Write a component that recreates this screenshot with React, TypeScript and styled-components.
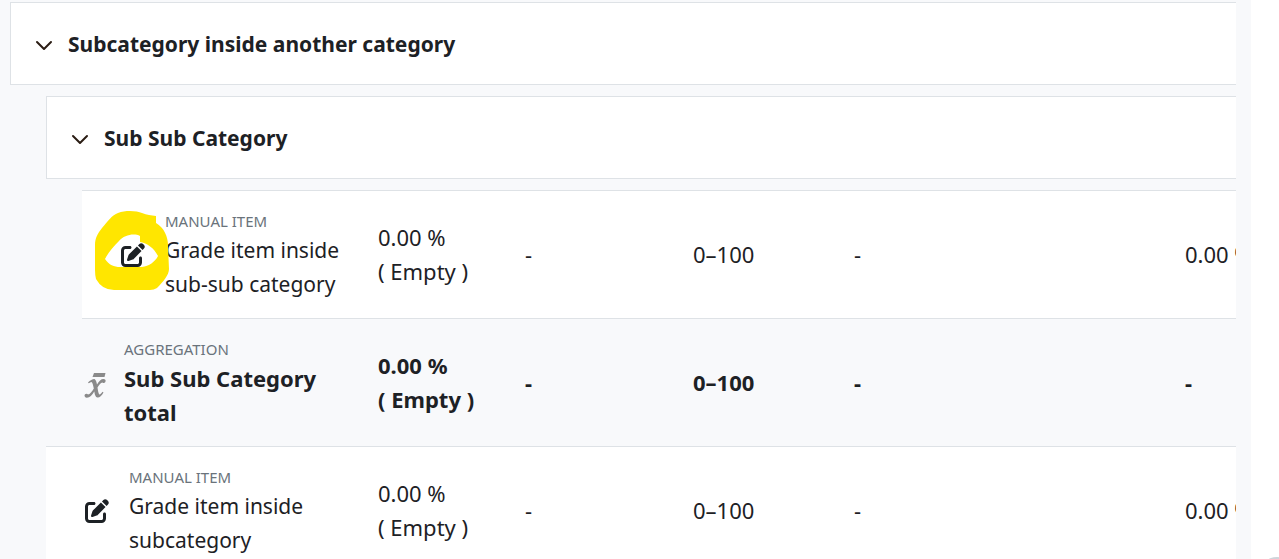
import React from "react";
import styled, { createGlobalStyle } from "styled-components";
import { FaPenToSquare } from "react-icons/fa6";

const GlobalStyle = createGlobalStyle`
  * { box-sizing: border-box; }
  html { height: 100%; overflow: hidden; }
  body { margin: 0; background: #fff; color: #1d2125; font: 22px/34px "Noto Sans", "Open Sans", sans-serif; }
`;

const Page = styled.div`
  padding-right: 28px;
`;

const Panel = styled.main`
  background: #f8f9fb;
  padding: 2px 15px 0 10px;
  min-height: 100vh;
`;

const Scroller = styled.div`
  overflow: hidden;
`;

const Table = styled.table`
  table-layout: fixed;
  width: 100%;
  min-width: 1500px;
  border-collapse: separate;
  border-spacing: 0;
`;

const Col = styled.col<{ $width?: number }>`
  width: ${(p) => (p.$width ? `${p.$width}px` : "auto")};
`;

const CategoryCell = styled.th`
  height: 83px;
  padding: 0 24px;
  border: 1px solid #dee2e6;
  background: #fff;
  font-size: 21px;
  text-align: left;
`;

const CategoryTitle = styled.div`
  display: flex;
  align-items: center;
  gap: 15px;
`;

const Toggle = styled.button`
  display: flex;
  padding: 2px 0 0;
  border: 0;
  background: none;
  color: #2b1d14;
`;

const Gap = styled.td`
  height: 11px;
  padding: 0;
`;

const Cell = styled.td<{ $total?: boolean }>`
  padding: 17px 12px 18px;
  border-top: 1px solid #dee2e6;
  background: ${(p) => (p.$total ? "#f8f9fb" : "#fff")};
  font-weight: ${(p) => (p.$total ? 700 : 400)};
  white-space: nowrap;
`;

const NameCell = styled(Cell).attrs({ as: "th" })`
  padding: 18px 0 17px;
  font-size: ${(p) => (p.$total ? 22 : 21)}px;
  text-align: left;
  white-space: normal;
`;

const Indent = styled.td`
  padding: 0;
`;

const Item = styled.div<{ $total?: boolean }>`
  display: flex;
  align-items: center;
  gap: ${(p) => (p.$total ? 18 : 20)}px;
  padding-left: ${(p) => (p.$total ? 2 : 39)}px;
`;

const IconBox = styled.span`
  position: relative;
  z-index: 0;
  display: flex;
  flex: none;
`;

const Marker = styled.svg`
  position: absolute;
  z-index: -1;
  left: -26px;
  top: -32px;
  pointer-events: none;
`;

const ItemText = styled.div`
  width: 200px;
`;

const Kind = styled.div`
  color: #6a737b;
  font-size: 15px;
  font-weight: 400;
  line-height: 24px;
  text-transform: uppercase;
`;

const HelpButton = styled.button`
  position: fixed;
  right: -16px;
  bottom: -34px;
  width: 36px;
  height: 36px;
  border: 0;
  border-radius: 50%;
  background: #ced4da;
`;

const Chevron = () => (
  <svg width="18" height="18" viewBox="0 0 18 18" fill="none" stroke="currentColor" strokeWidth="2" strokeLinecap="round" strokeLinejoin="round">
    <path d="M2 6l7 7 7-7" />
  </svg>
);

const MeanIcon = () => (
  <svg width="22" height="32" viewBox="0 -6 22 32" fill="#8a8a8a">
    <path d="M10 0H21.500L20.500 4H8.500z" />
    <path d="M4 9.500C6 7.500 8.500 6 10.500 6C12 7 12.500 9 13 11.500C15 8 17 6 19.500 6C21 6 22 7 21.500 8.500C21 10 19.500 10.500 18.500 9.500C16.500 9.800 15 12 13.500 14.500C14 18 14.700 21.300 15.500 21.500C16.500 21.500 17.500 20 18.500 18.800L19.500 19.500C17.500 23 15.500 24.700 13.500 24.500C11.500 24.300 10.800 21.500 10.300 18.500C8 22.500 5.500 25 2.500 24.700C0.500 24.500 0 22.500 1 21.300C2 20.300 3.500 20.500 4 21.500C6 21.300 8 18.500 9.800 15.500C9.200 12.200 8.500 9.200 7.500 8.900C6.500 8.900 5.500 9.700 4.700 10.300z" />
  </svg>
);

type ItemRow = {
  kind: string;
  name: string;
  indent: number;
  total?: boolean;
  marked?: boolean;
  contribution: string;
};

const GradeRow = ({ kind, name, indent, total, marked, contribution }: ItemRow) => (
  <tr>
    <Indent colSpan={indent} />
    <NameCell $total={total} colSpan={3 - indent} scope="row">
      <Item $total={total}>
        <IconBox>
          {marked && (
            <Marker width="76" height="80" viewBox="0 0 76 80" fill="#ffe600" fillRule="evenodd">
              <path d="M0 34C0 27 3 22 7 17C13 10 17 4 23 2C31 -1 42 0 47 2C52 4 56 4 61 5V12C69 17 73 25 73 35L74 58C74 64 68 71 62 77Q59 79 55 79H19Q7 79 1 68Q0 64 0 59zM10 48C14 54 19 56 25 56H47C54 55 60 51 63 45C59 37 52 32 45 31V25C39 22 29 24 24 30C18 36 13 42 10 48z" />
            </Marker>
          )}
          {total ? <MeanIcon /> : <FaPenToSquare size={24} />}
        </IconBox>
        <ItemText>
          <Kind>{kind}</Kind>
          {name}
        </ItemText>
      </Item>
    </NameCell>
    <Cell $total={total}>
      0.00 %<br />( Empty )
    </Cell>
    <Cell $total={total}>-</Cell>
    <Cell $total={total}>0–100</Cell>
    <Cell $total={total}>-</Cell>
    <Cell $total={total}>{contribution}</Cell>
  </tr>
);

const CategoryRow = ({ name, indent }: { name: string; indent: number }) => (
  <tr>
    {indent > 0 && <Indent colSpan={indent} />}
    <CategoryCell colSpan={8 - indent} scope="rowgroup">
      <CategoryTitle>
        <Toggle type="button" aria-label={`Collapse ${name}`}>
          <Chevron />
        </Toggle>
        {name}
      </CategoryTitle>
    </CategoryCell>
  </tr>
);

const GapRow = () => (
  <tr>
    <Gap colSpan={8} />
  </tr>
);

export default function App() {
  return (
    <Page>
      <GlobalStyle />
      <Panel>
        <Scroller>
          <Table>
            <colgroup>
              <Col $width={36} />
              <Col $width={36} />
              <Col $width={284} />
              <Col $width={147} />
              <Col $width={168} />
              <Col $width={161} />
              <Col $width={331} />
              <Col />
            </colgroup>
            <tbody>
              <CategoryRow name="Subcategory inside another category" indent={0} />
              <GapRow />
              <CategoryRow name="Sub Sub Category" indent={1} />
              <GapRow />
              <GradeRow kind="Manual item" name="Grade item inside sub-sub category" indent={2} marked contribution="0.00 %" />
              <GradeRow kind="Aggregation" name="Sub Sub Category total" indent={2} total contribution="-" />
              <GradeRow kind="Manual item" name="Grade item inside subcategory" indent={1} contribution="0.00 %" />
            </tbody>
          </Table>
        </Scroller>
      </Panel>
      <HelpButton type="button" aria-label="Help" />
    </Page>
  );
}
